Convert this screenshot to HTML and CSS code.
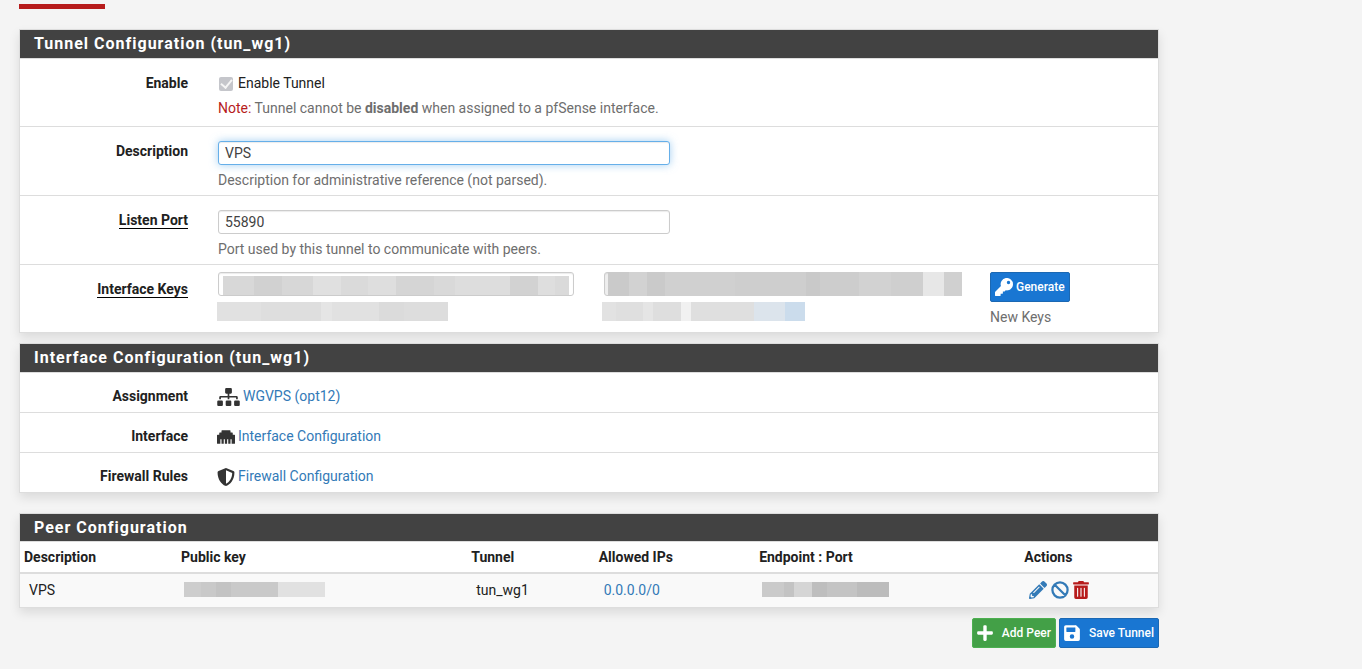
FILE: index.html
```html
<!DOCTYPE html>
<html lang="en">
<head>
<meta charset="utf-8">
<meta name="viewport" content="width=device-width, initial-scale=1">
<title>WireGuard Tunnel</title>
<link rel="stylesheet" href="styles.css">
</head>
<body>
<svg class="sprite" aria-hidden="true">
  <symbol id="key" viewBox="0 0 512 512"><path d="M512 176c0 97-79 176-176 176-11 0-22-1-32-3l-24 27a24 24 0 0 1-18 8h-38v40a24 24 0 0 1-24 24h-40v40a24 24 0 0 1-24 24H24a24 24 0 0 1-24-24v-78c0-6 3-12 7-17l162-162a176 176 0 1 1 343-55zM336 128a48 48 0 1 0 96 0 48 48 0 1 0-96 0z"/></symbol>
  <symbol id="plus" viewBox="0 0 448 512"><path d="M416 208H272V64a32 32 0 0 0-32-32h-32a32 32 0 0 0-32 32v144H32a32 32 0 0 0-32 32v32a32 32 0 0 0 32 32h144v144a32 32 0 0 0 32 32h32a32 32 0 0 0 32-32V304h144a32 32 0 0 0 32-32v-32a32 32 0 0 0-32-32z"/></symbol>
  <symbol id="save" viewBox="0 0 448 512"><path d="M434 130l-84-84a48 48 0 0 0-34-14H48A48 48 0 0 0 0 80v352a48 48 0 0 0 48 48h352a48 48 0 0 0 48-48V164a48 48 0 0 0-14-34zM224 416a64 64 0 1 1 0-128 64 64 0 0 1 0 128zm96-304v100a12 12 0 0 1-12 12H76a12 12 0 0 1-12-12V108a12 12 0 0 1 12-12h228a12 12 0 0 1 9 4l3 3a12 12 0 0 1 4 9z"/></symbol>
  <symbol id="sitemap" viewBox="0 0 640 512"><path d="M128 352H32a32 32 0 0 0-32 32v96a32 32 0 0 0 32 32h96a32 32 0 0 0 32-32v-96a32 32 0 0 0-32-32zm-24-80h192v48h48v-48h192v48h48v-57a39 39 0 0 0-39-39H344v-64h40a32 32 0 0 0 32-32V32a32 32 0 0 0-32-32H256a32 32 0 0 0-32 32v96a32 32 0 0 0 32 32h40v64H95a39 39 0 0 0-39 39v57h48zm264 80h-96a32 32 0 0 0-32 32v96a32 32 0 0 0 32 32h96a32 32 0 0 0 32-32v-96a32 32 0 0 0-32-32zm240 0h-96a32 32 0 0 0-32 32v96a32 32 0 0 0 32 32h96a32 32 0 0 0 32-32v-96a32 32 0 0 0-32-32z"/></symbol>
  <symbol id="ethernet" viewBox="0 0 512 512"><path d="M496 192h-48v-48a16 16 0 0 0-16-16h-48V80a16 16 0 0 0-16-16H144a16 16 0 0 0-16 16v48H80a16 16 0 0 0-16 16v48H16a16 16 0 0 0-16 16v224a16 16 0 0 0 16 16h80V320h32v128h64V320h32v128h64V320h32v128h64V320h32v128h80a16 16 0 0 0 16-16V208a16 16 0 0 0-16-16z"/></symbol>
  <symbol id="shield" viewBox="0 0 512 512"><path d="M466 84L274 4a48 48 0 0 0-37 0L45 84a48 48 0 0 0-29 44c0 199 115 336 221 380a48 48 0 0 0 37 0c85-35 222-159 222-380a48 48 0 0 0-30-44zM256 446V66l176 73c-3 151-82 263-176 307z"/></symbol>
  <symbol id="pencil" viewBox="0 0 512 512"><path d="M498 142l-47 47c-5 5-12 5-17 0L323 78c-5-5-5-12 0-17l47-47c19-19 49-19 68 0l60 60c19 19 19 49 0 68zM284 100L22 362 0 484c-3 16 12 31 28 28l122-22 262-262c5-5 5-12 0-17L301 100c-5-5-13-5-17 0zM124 340c-6-6-6-14 0-20l154-154c6-6 14-6 20 0s6 14 0 20L144 340c-6 6-14 6-20 0zm-36 84h48v36l-65 12-31-31 12-65h36z"/></symbol>
  <symbol id="ban" viewBox="0 0 512 512"><path fill="none" stroke="currentColor" stroke-width="64" d="M256 40a216 216 0 1 1 0 432 216 216 0 0 1 0-432zM105 105l302 302"/></symbol>
  <symbol id="trash" viewBox="0 0 448 512"><path d="M32 464a48 48 0 0 0 48 48h288a48 48 0 0 0 48-48V128H32zm272-256a16 16 0 0 1 32 0v224a16 16 0 0 1-32 0zm-96 0a16 16 0 0 1 32 0v224a16 16 0 0 1-32 0zm-96 0a16 16 0 0 1 32 0v224a16 16 0 0 1-32 0zM432 32H312l-9-19a24 24 0 0 0-22-13H167a24 24 0 0 0-22 13l-9 19H16A16 16 0 0 0 0 48v32a16 16 0 0 0 16 16h416a16 16 0 0 0 16-16V48a16 16 0 0 0-16-16z"/></symbol>
</svg>

<main class="container">
  <div class="tab-line"></div>

  <form>
    <section class="panel">
      <h2 class="panel-title">Tunnel Configuration (tun_wg1)</h2>
      <div class="row">
        <span class="row-label">Enable</span>
        <div class="row-body enable-body">
          <label class="check"><input class="check-box" type="checkbox" checked disabled>Enable Tunnel</label>
          <p class="help"><span class="note">Note:</span> Tunnel cannot be <strong>disabled</strong> when assigned to a pfSense interface.</p>
        </div>
      </div>
      <div class="row">
        <label class="row-label" for="descr">Description</label>
        <div class="row-body halves">
          <div class="field">
            <input class="text-box active" id="descr" type="text" value="VPS">
            <p class="help">Description for administrative reference (not parsed).</p>
          </div>
        </div>
      </div>
      <div class="row">
        <label class="row-label" for="port"><span class="required">Listen Port</span></label>
        <div class="row-body halves">
          <div class="field">
            <input class="text-box" id="port" type="text" value="55890">
            <p class="help">Port used by this tunnel to communicate with peers.</p>
          </div>
        </div>
      </div>
      <div class="row">
        <label class="row-label" for="private-key"><span class="required">Interface Keys</span></label>
        <div class="row-body keys">
          <div class="field">
            <div class="key-box">
              <input class="text-box" id="private-key" type="text" aria-label="Private key">
              <span class="mask mask-private"></span>
            </div>
            <div class="mask-help mask-help-private"></div>
          </div>
          <div class="field">
            <div class="key-box">
              <input class="text-box readonly" type="text" aria-label="Public key" readonly>
              <span class="mask mask-public"></span>
            </div>
            <div class="mask-help mask-help-public"></div>
          </div>
          <div class="field">
            <button class="btn btn-primary" type="button"><svg class="icon"><use href="#key"/></svg>Generate</button>
            <p class="help">New Keys</p>
          </div>
        </div>
      </div>
    </section>

    <section class="panel interface-panel">
      <h2 class="panel-title">Interface Configuration (tun_wg1)</h2>
      <div class="row compact">
        <span class="row-label">Assignment</span>
        <div class="row-body link-line"><svg class="icon icon-wide"><use href="#sitemap"/></svg><a href="#">WGVPS (opt12)</a></div>
      </div>
      <div class="row compact">
        <span class="row-label">Interface</span>
        <div class="row-body link-line"><svg class="icon"><use href="#ethernet"/></svg><a href="#">Interface Configuration</a></div>
      </div>
      <div class="row compact">
        <span class="row-label">Firewall Rules</span>
        <div class="row-body link-line"><svg class="icon"><use href="#shield"/></svg><a href="#">Firewall Configuration</a></div>
      </div>
    </section>

    <section class="panel peer-panel">
      <h2 class="panel-title">Peer Configuration</h2>
      <table class="peers">
        <colgroup><col class="col-descr"><col class="col-key"><col class="col-tunnel"><col class="col-ips"><col class="col-endpoint"><col></colgroup>
        <thead>
          <tr><th>Description</th><th>Public key</th><th>Tunnel</th><th>Allowed IPs</th><th>Endpoint : Port</th><th>Actions</th></tr>
        </thead>
        <tbody>
          <tr>
            <td>VPS</td>
            <td><div class="mask-cell mask-peer-key"></div></td>
            <td>tun_wg1</td>
            <td><a href="#">0.0.0.0/0</a></td>
            <td><div class="mask-cell mask-endpoint"></div></td>
            <td>
              <div class="actions">
                <a href="#" aria-label="Edit peer"><svg class="icon"><use href="#pencil"/></svg></a>
                <a href="#" aria-label="Disable peer"><svg class="icon"><use href="#ban"/></svg></a>
                <a class="danger" href="#" aria-label="Delete peer"><svg class="icon icon-narrow"><use href="#trash"/></svg></a>
              </div>
            </td>
          </tr>
        </tbody>
      </table>
    </section>

    <div class="buttons">
      <button class="btn btn-success" type="button"><svg class="icon icon-narrow"><use href="#plus"/></svg><span class="btn-text">Add Peer</span></button>
      <button class="btn btn-primary" type="submit"><svg class="icon icon-narrow"><use href="#save"/></svg><span class="btn-text">Save Tunnel</span></button>
    </div>
  </form>
</main>
</body>
</html>
```
FILE: styles.css
```css
* { box-sizing: border-box; }

body {
  margin: 0;
  background: #f4f4f4;
  color: #212121;
  font: 14px/20px Roboto, "Liberation Sans", sans-serif;
}

a { color: #337ab7; text-decoration: none; }
p { margin: 0; }

.sprite { display: none; }

.container {
  max-width: 1178px;
  padding: 4px 19px 20px;
}

.tab-line {
  width: 86px;
  height: 5px;
  margin-bottom: 20px;
  background: #b71c1c;
}

.panel {
  border: 1px solid #ddd;
  background: #fff;
  box-shadow: 0 5px 10px rgba(0, 0, 0, 0.1);
}
.interface-panel { margin-top: 10px; }
.peer-panel { margin-top: 20px; }

.panel-title {
  margin: 0;
  padding: 4px 14px;
  border-bottom: 1px solid #ddd;
  background: #424242;
  background-clip: padding-box;
  color: #fff;
  font-size: 16px;
  font-weight: 700;
  line-height: 20px;
  letter-spacing: 1px;
}
.peer-panel .panel-title { padding-bottom: 3px; }

.row {
  display: grid;
  grid-template-columns: 168px 1fr;
  column-gap: 30px;
  padding-right: 7px;
  padding-bottom: 5px;
}
.row + .row { border-top: 1px solid #ddd; }

.row-label {
  padding-top: 14px;
  font-weight: 700;
  text-align: right;
}
.required {
  display: inline-block;
  height: 19px;
  border-bottom: 1px solid #000;
}

.row-body { padding-top: 14px; }
.compact { column-gap: 29px; padding-bottom: 6px; }
.compact .row-label,
.compact .row-body { padding-top: 13px; }

.enable-body { padding-bottom: 3px; }
.halves { display: grid; grid-template-columns: 452fr 451fr; column-gap: 30px; }
.keys { display: grid; grid-template-columns: 356fr 356fr 161fr; column-gap: 30px; padding-top: 7px; }
.field { min-width: 0; }

.help { margin-top: 5px; color: #6e6e6e; }
.note { color: #b71c1c; }

.check { display: flex; align-items: center; }
.check-box {
  appearance: none;
  width: 14px;
  height: 14px;
  margin: 1px 5px 0 1px;
  border-radius: 2px;
  background: #c5c6cb;
  display: grid;
  place-items: center;
}
.check-box::before {
  content: "";
  width: 5px;
  height: 9px;
  margin-bottom: 2px;
  border: solid #f5f5f5;
  border-width: 0 2px 2px 0;
  transform: rotate(40deg);
}

.text-box {
  display: block;
  width: 100%;
  height: 24px;
  padding: 0 6px;
  border: 1px solid #ccc;
  border-radius: 3px;
  background: #fff;
  box-shadow: inset 0 1px 1px rgba(0, 0, 0, 0.08);
  color: #424242;
  font: inherit;
  outline: none;
}
.text-box.active {
  border-color: #66afe9;
  box-shadow: inset 0 1px 1px rgba(0, 0, 0, 0.08), 0 0 8px rgba(102, 175, 233, 0.6);
}
.text-box.readonly { background: #eee; }

.key-box { position: relative; }
.mask { position: absolute; }
.mask-private {
  inset: 4px 5px 1px;
  background: linear-gradient(90deg, #d8d8d8 9%, #d1d1d1 9% 17%, #d7d7d7 17% 26%, #e0e0e0 26% 34%, #dadada 34% 42%, #dedede 42% 50%, #d5d5d5 50% 61%, #d9d9d9 61% 67%, #dddddd 67% 83%, #d2d2d2 83% 91%, #dedede 91% 96%, #dadada 96%);
}
.mask-public {
  inset: 0 -2px 0 4px;
  background: linear-gradient(90deg, #cacaca 6%, #d2d2d2 6% 11%, #cacaca 11% 16%, #d0d0d0 16% 36%, #cecece 36% 56%, #c9c9c9 56% 60%, #cdcdcd 60% 71%, #d2d2d2 71% 80%, #cfcfcf 80% 89%, #e7e7e7 89% 95%, #d0d0d0 95%);
}
.mask-help { height: 19px; margin-top: 6px; }
.mask-help-private {
  width: 231px;
  margin-left: -1px;
  background: linear-gradient(90deg, #e1e1e1 19%, #dedede 19% 45%, #e5e5e5 45% 50%, #e1e1e1 50% 70%, #dbdbdb 70% 81%, #dddddd 81%);
}
.mask-help-public {
  width: 203px;
  margin-left: -2px;
  background: linear-gradient(90deg, #e2e2e2 7%, #dfdfdf 7% 20%, #e5e5e5 20% 25%, #dedede 25% 39%, #f1f1f1 39% 44%, #dfdfdf 44% 75%, #dce4ec 75% 90%, #cbdcec 90%);
}

.icon { flex: none; width: 18px; height: 18px; fill: currentColor; }
.icon-wide { width: 23px; }
.icon-narrow { width: 16px; }

.link-line { display: flex; align-items: center; gap: 3px; }
.link-line .icon { margin-bottom: -2px; color: #333; }

.btn {
  display: inline-flex;
  align-items: center;
  gap: 3px;
  height: 30px;
  padding: 0 4px;
  border: 1px solid;
  border-radius: 2px;
  color: #fff;
  font: 500 12px/18px Roboto, "Liberation Sans", sans-serif;
}
.btn-primary { border-color: #1b68b3; background: #1976d2; }
.btn-success { border-color: #4caf50; background: #43a047; }
.btn-text { padding-left: 6px; }
.buttons { display: flex; justify-content: flex-end; gap: 3px; margin-top: 10px; }

.peers { width: 100%; border-collapse: collapse; table-layout: fixed; }
.peers th { height: 31px; padding: 0 4px; border-bottom: 2px solid #ddd; text-align: left; font-weight: 700; }
.peers td { height: 34px; padding: 0 9px 2px; background: #f9f9f9; }
.col-descr { width: 13.8%; }
.col-key { width: 25.5%; }
.col-tunnel { width: 11.2%; }
.col-ips { width: 14.1%; }
.col-endpoint { width: 23.3%; }

.mask-cell { height: 15px; margin-left: -2px; }
.mask-peer-key {
  width: 141px;
  background: linear-gradient(90deg, #cdcdcd 12%, #c9c9c9 12% 23%, #c3c3c3 23% 33%, #c9c9c9 33% 67%, #e1e1e1 67%);
}
.mask-endpoint {
  width: 127px;
  background: linear-gradient(90deg, #cacaca 17%, #c3c3c3 17% 25%, #d5d5d5 25% 39%, #bebebe 39% 51%, #c4c4c4 51% 75%, #bcbcbc 75%);
}

.actions { display: flex; align-items: center; gap: 4px; }
.actions a { display: flex; }
.actions .danger { color: #b71c1c; }
```
